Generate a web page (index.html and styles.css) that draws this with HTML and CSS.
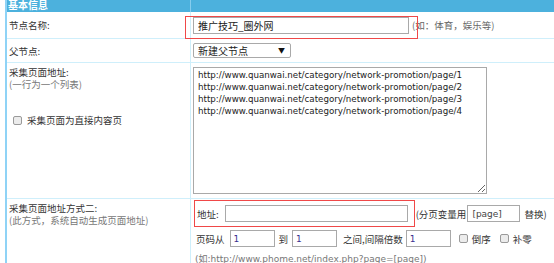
FILE: index.html
```html
<!DOCTYPE html>
<html lang="zh-CN">
<head>
    <meta charset="UTF-8">
    <meta name="viewport" content="width=device-width, initial-scale=1.0">
    <title>采集节点</title>
    <link rel="stylesheet" href="styles.css">
</head>
<body>
<div class="panel">
    <div class="head">
        <div class="head-title">基本信息</div>
        <div class="head-rest"></div>
    </div>

    <div class="row row-name">
        <div class="label">节点名称:</div>
        <div class="field">
            <input type="text" class="txt txt-name" value="推广技巧_圈外网">
            <span class="tip">(如：体育，娱乐等)</span>
        </div>
        <div class="mark mark-name"></div>
    </div>

    <div class="row row-parent">
        <div class="label">父节点:</div>
        <div class="field">
            <span class="select-wrap">
                <select class="sel">
                    <option>新建父节点</option>
                </select>
                <span class="sel-arrow">▼</span>
            </span>
        </div>
    </div>

    <div class="row row-urls">
        <div class="label label-top">
            <div>采集页面地址:</div>
            <div class="note">(一行为一个列表)</div>
            <label class="check-line">
                <input type="checkbox" class="chk">
                <span>采集页面为直接内容页</span>
            </label>
        </div>
        <div class="field field-top">
            <textarea class="urls">http://www.quanwai.net/category/network-promotion/page/1
http://www.quanwai.net/category/network-promotion/page/2
http://www.quanwai.net/category/network-promotion/page/3
http://www.quanwai.net/category/network-promotion/page/4</textarea>
        </div>
    </div>

    <div class="row row-auto">
        <div class="label label-top label-auto">
            <div>采集页面地址方式二:</div>
            <div class="note">(此方式，系统自动生成页面地址)</div>
        </div>
        <div class="field field-auto">
            <div class="line">
                <span class="addr-box">
                    <span>地址:</span>
                    <input type="text" class="txt txt-addr">
                </span>
                <span class="tip-dark">(分页变量用</span>
                <input type="text" class="txt txt-var" value="[page]">
                <span class="tip-dark">替换)</span>
            </div>
            <div class="line line-pages">
                <span>页码从</span>
                <input type="text" class="txt txt-num num-from" value="1">
                <span>到</span>
                <input type="text" class="txt txt-num num-to" value="1">
                <span>之间,间隔倍数</span>
                <input type="text" class="txt txt-num num-step" value="1">
                <label class="opt"><input type="checkbox" class="chk"><span>倒序</span></label>
                <label class="opt"><input type="checkbox" class="chk"><span>补零</span></label>
            </div>
            <div class="hint">(如:http://www.phome.net/index.php?page=[page])</div>
        </div>
    </div>
</div>
</body>
</html>
```

FILE: styles.css
```css
body {
    margin: 0;
    background-color: #ffffff;
    font-family: "Noto Sans CJK SC", "DejaVu Sans", sans-serif;
    font-size: 9.5px;
    color: #333333;
    overflow: hidden;
}

.panel {
    margin-top: -8px;
    margin-left: 5px;
    border-left: 2px solid #8fd3f6;
}

.head {
    display: flex;
    height: 20px;
    background-color: #4cb1dd;
}

.head-title {
    width: 182px;
    padding: 6px 0 0 1px;
    line-height: 14px;
    font-size: 10px;
    font-weight: bold;
    color: #ffffff;
    border-right: 1px solid #86cdee;
}

.head-rest {
    flex: 1;
}

.row {
    position: relative;
    display: flex;
    border-bottom: 1px solid #cfeffb;
}

.row-name {
    height: 26px;
}

.row-parent {
    height: 23px;
}

.row-urls {
    height: 135px;
}

.row-auto {
    height: 80px;
}

.label {
    box-sizing: border-box;
    width: 184px;
    padding-left: 2px;
    display: flex;
    align-items: center;
    border-right: 1px solid #cfeffb;
}

.label-top {
    flex-direction: column;
    align-items: flex-start;
    padding-top: 3px;
    line-height: 12px;
}

.label-auto {
    padding-top: 3px;
}

.note {
    color: #777777;
}

.check-line {
    display: flex;
    align-items: center;
    margin-top: 24px;
    margin-left: 4px;
}

.check-line .chk {
    margin: 0 5px 0 0;
}

.field {
    flex: 1;
    padding-left: 2px;
    display: flex;
    align-items: flex-start;
}

.row-name .field {
    padding-top: 5px;
}

.row-parent .field {
    padding-top: 4px;
}

.field-top {
    padding-top: 4px;
}

.field-auto {
    flex-direction: column;
    padding-top: 1px;
}

.txt {
    box-sizing: border-box;
    height: 17px;
    margin: 0;
    padding: 0 4px;
    border: 1px solid #a9a9a9;
    font-family: "Noto Sans CJK SC", "DejaVu Sans", sans-serif;
    font-size: 10px;
    color: #222222;
    background-color: #ffffff;
    outline: none;
}

.txt-name {
    width: 216px;
}

.tip {
    margin-left: 3px;
    line-height: 17px;
    color: #666666;
}

.mark {
    position: absolute;
    box-sizing: border-box;
    border: 1px solid #f04848;
    pointer-events: none;
}

.mark-name {
    left: 178px;
    top: 4px;
    width: 233px;
    height: 23px;
}

.select-wrap {
    position: relative;
    display: inline-block;
}

.sel {
    box-sizing: border-box;
    width: 98px;
    height: 15px;
    margin: 0;
    padding: 0 0 0 4px;
    border: 1px solid #a9a9a9;
    border-radius: 2px;
    background-color: #ffffff;
    font-family: "Noto Sans CJK SC", sans-serif;
    font-size: 10px;
    line-height: 13px;
    color: #222222;
    appearance: none;
    -webkit-appearance: none;
}

.sel-arrow {
    position: absolute;
    right: 6px;
    top: 2px;
    font-size: 7px;
    line-height: 11px;
    color: #111111;
}

.urls {
    box-sizing: border-box;
    width: 294px;
    height: 127px;
    margin: 0;
    padding: 1px 4px;
    border: 1px solid #a9a9a9;
    font-family: "DejaVu Sans", sans-serif;
    font-size: 8.7px;
    line-height: 12px;
    color: #222222;
    outline: none;
}

.line {
    display: flex;
    align-items: center;
}

.addr-box {
    display: inline-flex;
    align-items: center;
    margin-left: 1px;
    padding: 4px 6px 4px 2px;
    border: 1px solid #f04848;
}

.txt-addr {
    width: 183px;
    margin-left: 6px;
}

.tip-dark {
    color: #333333;
}

.addr-box + .tip-dark {
    margin-left: 1px;
}

.txt-var {
    width: 53px;
    margin: 0 4px 0 1px;
    font-family: "DejaVu Sans", sans-serif;
    font-size: 9px;
    color: #444444;
}

.line-pages {
    margin-top: 3px;
    padding-left: 3px;
}

.txt-num {
    width: 45px;
    font-family: "DejaVu Sans", sans-serif;
    font-size: 9px;
    color: #3b2f8f;
    padding-left: 3px;
}

.num-from {
    margin: 0 4px 0 5px;
}

.num-to {
    margin: 0 6px 0 4px;
}

.num-step {
    margin: 0 8px 0 3px;
}

.opt {
    display: flex;
    align-items: center;
}

.opt .chk {
    margin: 0 4px 0 0;
}

.opt + .opt {
    margin-left: 9px;
}

.chk {
    box-sizing: border-box;
    width: 9px;
    height: 9px;
    border: 1px solid #9a9a9a;
    border-radius: 2px;
    background-color: #ececec;
    appearance: none;
    -webkit-appearance: none;
}

.hint {
    margin-top: 6px;
    padding-left: 2px;
    color: #777777;
    font-family: "DejaVu Sans", "Noto Sans CJK SC", sans-serif;
    font-size: 9px;
    line-height: 12px;
}
```
